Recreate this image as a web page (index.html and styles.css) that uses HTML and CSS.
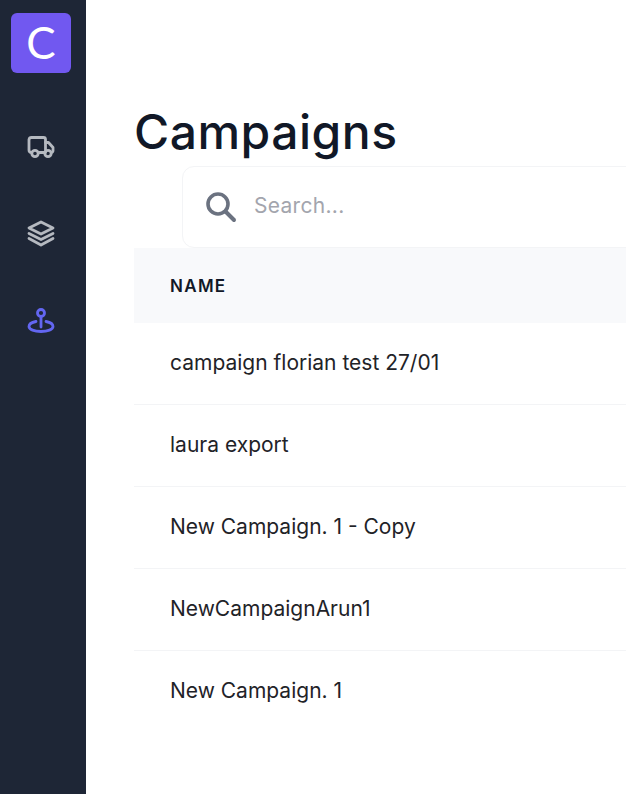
FILE: index.html
```html
<!DOCTYPE html>
<html lang="en">
<head>
<meta charset="utf-8">
<title>Campaigns</title>
<link rel="stylesheet" href="styles.css">
</head>
<body>
<div class="app">
  <nav class="sidebar">
    <div class="logo">C</div>
    <a class="nav-item">
      <svg width="28" height="28" viewBox="0 0 28 28" fill="none" stroke="currentColor" stroke-width="2.800" stroke-linecap="round" stroke-linejoin="round"><path d="M4.500 20.500H4A2.500 2.500 0 0 1 2 18V7.500A2.500 2.500 0 0 1 4.500 5.500H16.500A2 2 0 0 1 18.500 7.500V20.500H11.500"/><path d="M18.500 10.500H21.500L26 15.500V19A1.800 1.800 0 0 1 24.500 20.500"/><circle cx="8" cy="21.500" r="3.200"/><circle cx="21" cy="21.500" r="3.200"/></svg>
    </a>
    <a class="nav-item">
      <svg width="28" height="28" viewBox="0 0 28 28" fill="none" stroke="currentColor" stroke-width="2.800" stroke-linecap="round" stroke-linejoin="round"><path d="M14 3 26 9 14 15 2 9z"/><path d="M2 14.500 14 20.500 26 14.500"/><path d="M2 19.500 14 26 26 19.500"/></svg>
    </a>
    <a class="nav-item active">
      <svg width="28" height="28" viewBox="0 0 28 28" fill="none" stroke="currentColor" stroke-width="2.800" stroke-linecap="round" stroke-linejoin="round"><circle cx="14" cy="7" r="3.500"/><path d="M14 10.500V21"/><path d="M9 15.500C4.600 16.300 2 18 2 20.500 2 23.600 7.400 25.500 14 25.500S26 23.600 26 20.500C26 18 23.400 16.300 19 15.500"/></svg>
    </a>
  </nav>
  <main class="main">
    <h1 class="title">Campaigns</h1>
    <div class="search">
      <svg class="search-icon" width="34" height="34" viewBox="0 0 34 34" fill="none" stroke="currentColor" stroke-linecap="round"><circle cx="14" cy="14" r="10" stroke-width="3.600"/><path d="M21.500 21.500 30 30" stroke-width="4"/></svg>
      <span class="search-text">Search...</span>
    </div>
    <div class="table-head">NAME</div>
    <div class="row">campaign florian test 27/01</div>
    <div class="row">laura export</div>
    <div class="row">New Campaign. 1 - Copy</div>
    <div class="row">NewCampaignArun1</div>
    <div class="row">New Campaign. 1</div>
  </main>
</div>
</body>
</html>
```
FILE: styles.css
```css
* { box-sizing: border-box; }
html, body { margin: 0; height: 100%; overflow: hidden; background: #fff; }
body { font-family: Inter, "Liberation Sans", sans-serif; color: #1f2328; }
.app { display: flex; height: 794px; width: 626px; overflow: hidden; }
.sidebar { width: 86px; flex: none; background: #1e2636; display: flex; flex-direction: column; align-items: center; padding-top: 13px; }
.logo { width: 60px; height: 60px; margin-left: -4px; border-radius: 6px; background: #7158f0; color: #fff; font-family: Lato, Inter, sans-serif; font-size: 44px; font-weight: 400; display: flex; align-items: center; justify-content: center; padding-bottom: 2px; }
.nav-item { width: 28px; height: 28px; color: #b5b9c0; margin-left: -4px; display: block; margin-top: 59px; }
.nav-item svg { display: block; overflow: visible; }
.nav-item.active { color: #6366f1; }
.main { flex: 1; min-width: 0; padding: 100px 0 0 48px; }
.title { margin: 0; height: 66px; font-size: 48px; line-height: 64px; font-weight: 500; color: #111827; letter-spacing: 0.5px; }
.search { margin-left: 48px; height: 82px; width: 600px; border: 1px solid #f3f4f6; border-radius: 12px; display: flex; align-items: center; padding-left: 21px; gap: 16px; }
.search-icon { color: #6b7280; flex: none; }
.search-text { font-size: 21px; letter-spacing: 0.3px; line-height: 24px; margin-top: -2px; color: #a3a5ad; }
.table-head { height: 75px; background: #f8f9fb; padding-left: 36px; display: flex; align-items: center; font-size: 17px; font-weight: 600; letter-spacing: 1.300px; color: #111827; }
.row { height: 82px; padding-left: 36px; padding-bottom: 2px; display: flex; align-items: center; font-size: 21px; border-bottom: 1px solid #f3f4f6; color: #1f2328; }
.row:last-child { border-bottom-color: transparent; }
```
